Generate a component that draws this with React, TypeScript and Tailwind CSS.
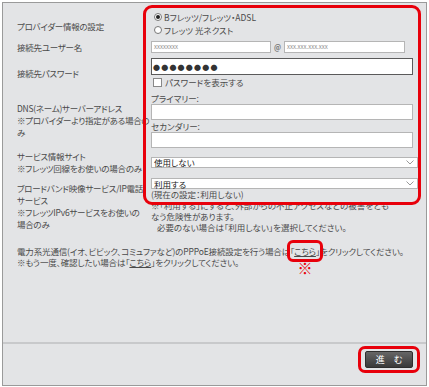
import React from "react";

function Radio({ checked, label }: { checked?: boolean; label: string }) {
  return (
    <div className="flex items-center h-[13px] pl-[3px]">
      <span className="w-[8px] h-[8px] rounded-full border border-[#777] bg-white flex items-center justify-center">
        {checked && <span className="w-[4px] h-[4px] rounded-full bg-[#222]" />}
      </span>
      <span className="ml-[2px]">{label}</span>
    </div>
  );
}

function Chevron() {
  return (
    <svg width="8" height="5" viewBox="0 0 8 5" className="mr-[3px]">
      <polyline points="0.5,0.5 4,4 7.5,0.5" fill="none" stroke="#999" strokeWidth="1" />
    </svg>
  );
}

function Select({ value }: { value: string }) {
  return (
    <div className="w-[267px] h-[11px] bg-white border border-[#b5b5b5] flex items-center justify-between pl-[2px] text-[#222] leading-[10px]">
      <span>{value}</span>
      <Chevron />
    </div>
  );
}

const label = "w-[134px] whitespace-nowrap tracking-[-0.25px]";

export default function App() {
  return (
    <div className="w-[429px] h-[387px] bg-white pt-[2px] pl-[2px] overflow-hidden font-['Noto_Sans_CJK_JP','Noto_Sans',sans-serif] [font-feature-settings:'palt']">
      <div className="relative w-[425px] h-[384px] border border-[#9a9a9a] bg-[#e3e4e6] flex flex-col text-[8.5px] leading-[12px] text-[#4a4a4a]">
        <div className="h-[341px] border-b-2 border-[#c8c9cb] pl-[14px] pt-[7px] flex flex-col">
          {/* Row 1 */}
          <div className="flex items-center">
            <div className={`${label} pt-[5px]`}>プロバイダー情報の設定</div>
            <div className="flex flex-col">
              <Radio checked label="Bフレッツ/フレッツ・ADSL" />
              <Radio label="フレッツ 光ネクスト" />
            </div>
          </div>
          {/* Row 2 */}
          <div className="flex items-center mt-[5px]">
            <div className={label}>接続先ユーザー名</div>
            <div className="flex items-center">
              <div className="w-[120px] h-[12px] bg-white border border-[#b5b5b5] text-[6px] leading-[10px] text-[#8a8a8a] pl-[2px]">xxxxxxxx</div>
              <span className="w-[13px] text-center text-[7px] font-bold text-[#777]">@</span>
              <div className="w-[121px] h-[12px] bg-white border border-[#b5b5b5] text-[6px] leading-[10px] text-[#8a8a8a] pl-[2px]">xxx.xxx.xxx.xxx</div>
            </div>
          </div>
          {/* Row 3 */}
          <div className="flex items-center mt-[5px]">
            <div className={label}>接続先パスワード</div>
            <div className="flex flex-col">
              <div className="w-[262px] h-[17px] bg-white border border-[#5a5a5a] flex items-center pl-[1px] text-[7px] tracking-[1.2px] text-[#333]">●●●●●●●●</div>
              <div className="flex items-center h-[12px] mt-[1px] pl-[2px]">
                <span className="w-[9px] h-[9px] bg-white border border-[#888]" />
                <span className="ml-[3px]">パスワードを表示する</span>
              </div>
            </div>
          </div>
          {/* Row 4 */}
          <div className="flex items-center mt-[4px]">
            <div className={label}>
              DNS(ネーム)サーバーアドレス
              <br />
              ※プロバイダーより指定がある場合の
              <br />み
            </div>
            <div className="flex flex-col">
              <div className="h-[12px]">プライマリー:</div>
              <div className="w-[262px] h-[16px] bg-white border border-[#b5b5b5]" />
              <div className="h-[12px]">セカンダリー:</div>
              <div className="w-[262px] h-[16px] bg-white border border-[#b5b5b5]" />
            </div>
          </div>
          {/* Row 5 */}
          <div className="flex items-center mt-[2px]">
            <div className={label}>
              サービス情報サイト
              <br />
              ※フレッツ回線をお使いの場合のみ
            </div>
            <Select value="使用しない" />
          </div>
          {/* Row 6 */}
          <div className="flex items-center mt-[4px]">
            <div className={label}>
              ブロードバンド映像サービス/IP電話
              <br />
              サービス
              <br />
              ※フレッツIPv6サービスをお使いの
              <br />
              場合のみ
            </div>
            <div className="flex flex-col leading-[11px]">
              <Select value="利用する" />
              <div>(現在の設定：利用しない)</div>
              <div className="whitespace-nowrap">※「利用する」にすると、外部からの不正アクセスなどの被害をとも</div>
              <div>なう危険性があります。</div>
              <div className="pl-[6px]">必要のない場合は「利用しない」を選択してください。</div>
            </div>
          </div>
          {/* Notes */}
          <div className="mt-[13px] leading-[11px] whitespace-nowrap tracking-[-0.15px]">
            <div>
              電力系光通信(イオ、ビビック、コミュファなど)のPPPoE接続設定を行う場合は
              <span className="relative inline-block">
                「<span className="underline">こちら</span>」
                <span className="absolute -left-[3px] -right-[3px] -top-[6px] -bottom-[5px] border-[3px] border-[#e8000b] rounded-[6px]" />
                <span className="absolute left-1/2 -translate-x-1/2 top-[14px] text-[15px] leading-[15px] text-[#e8000b]">※</span>
              </span>
              をクリックしてください。
            </div>
            <div>
              ※もう一度、確認したい場合は「<span className="underline">こちら</span>」をクリックしてください。
            </div>
          </div>
        </div>
        <div className="flex-1 flex justify-end items-start pt-[2px] pr-[6px]">
          <div className="border-[3px] border-[#e8000b] rounded-[7px] px-[4px] py-[2px]">
            <button className="w-[48px] h-[17px] rounded-[2px] border border-[#2e2e2e] bg-gradient-to-b from-[#666] to-[#3a3a3a] text-white text-[9px] leading-[15px]">
              進　む
            </button>
          </div>
        </div>
        {/* Red annotation box */}
        <div className="absolute left-[140px] top-[2px] w-[278px] h-[200px] border-[3px] border-[#e8000b] rounded-[9px] pointer-events-none" />
      </div>
    </div>
  );
}
